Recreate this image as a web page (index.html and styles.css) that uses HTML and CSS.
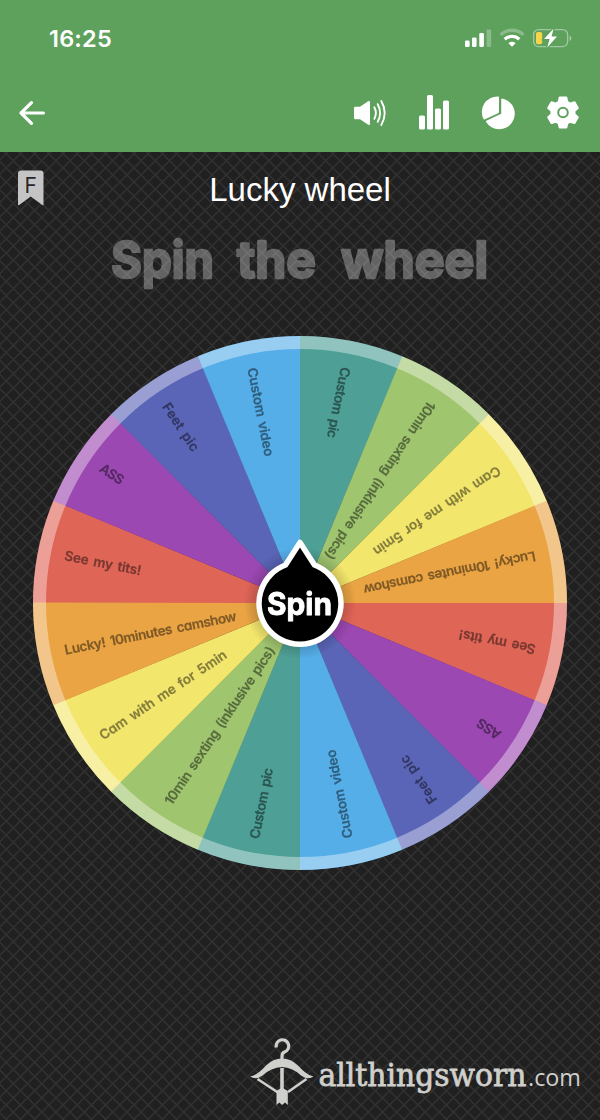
FILE: index.html
```html
<!DOCTYPE html>
<html lang="en">
<head>
  <meta charset="UTF-8">
  <title>Lucky wheel</title>
  <link rel="stylesheet" href="styles.css">
</head>
<body>
  <header class="header">
    <div class="status-bar">
      <span class="clock">16:25</span>
      <svg class="status-icons" width="110" height="24" viewBox="0 0 110 24">
        <g fill="#fff">
          <rect x="1" y="14.500" width="4.600" height="6.500" rx="1.300"/>
          <rect x="8" y="11.500" width="4.600" height="9.500" rx="1.300"/>
          <rect x="15.300" y="7" width="4.600" height="14" rx="1.300"/>
          <rect x="22.600" y="3.500" width="4.600" height="17.500" rx="1.300" opacity=".28"/>
          <path d="M48 20.800l-3.600-3.600a5.200 5.200 0 0 1 7.200 0z"/>
        </g>
        <g fill="none" stroke="#fff" stroke-width="3.300">
          <path d="M40.700 13.300a10.600 10.600 0 0 1 14.600 0"/>
          <path d="M36.600 8.700a16.800 16.800 0 0 1 22.800 0" opacity=".28"/>
        </g>
        <rect x="69.600" y="3.600" width="34" height="17" rx="5" fill="none" stroke="#fff" stroke-width="1.300" opacity=".42"/>
        <path d="M105.500 9.500v5.400a2.900 2.900 0 0 0 0-5.400z" fill="#fff" opacity=".45"/>
        <rect x="72" y="6" width="6.200" height="12.200" rx="2" fill="#f7d548"/>
        <path class="bolt" d="M89.500 2.800L80 13h5.600l-2.400 8.600L93 10.600h-5.400z"/>
      </svg>
    </div>
    <nav class="toolbar">
      <svg width="28" height="28" viewBox="0 0 28 28" fill="none" stroke="#fff" stroke-width="3.200" stroke-linecap="round" stroke-linejoin="round">
        <path d="M25.400 14H3M13.500 3.700L3 14l10.500 10.300"/>
      </svg>
      <div class="actions">
        <svg width="34" height="36" viewBox="0 0 34 36">
          <path d="M1 13q0-1.300 1.300-1.300H7L15.200 6.200Q17 5.300 17 7V29q0 1.700-1.800.8L7 24.300H2.300Q1 24.300 1 23z" fill="#fff"/>
          <g fill="none" stroke="#fff" stroke-width="1.900" stroke-linecap="round">
            <path d="M21.300 12.300q3.200 5.700 0 11.400"/>
            <path d="M24.700 9.200q4.900 8.800 0 17.600"/>
            <path d="M28.300 6q6.800 12 0 24"/>
          </g>
        </svg>
        <svg width="32" height="36" viewBox="0 0 32 36" fill="#fff">
          <rect x="1" y="20.500" width="6" height="14" rx="1.600"/>
          <rect x="9" y="0" width="6" height="34.500" rx="1.600"/>
          <rect x="17" y="13.500" width="6" height="21" rx="1.600"/>
          <rect x="25" y="5.500" width="6" height="29" rx="1.600"/>
        </svg>
        <svg width="34" height="36" viewBox="-1 .5 34 36" fill="#fff">
          <path d="M17 3Q17 2 16 2A15.500 15.500 0 0 0 1.500 24.500Q2 25.300 3 24.800L16.100 18.700Q17 18.200 17 17.200z"/>
          <path d="M19.200 4.400v14.800L4.300 26.300Q3.700 26.700 4.100 27.400A15.500 15.500 0 1 0 20.200 4z"/>
        </svg>
        <svg width="34" height="36" viewBox="0 .5 34 36">
          <path fill="#fff" stroke="#fff" stroke-width="2" stroke-linejoin="round" d="M13.700 3h6.600l1 4.400 2.900 1.700 4.300-1.400 3.300 5.800-3.300 3v3.300l3.300 3-3.300 5.800-4.300-1.400-2.900 1.700-1 4.100h-6.600l-1-4.100-2.900-1.700-4.300 1.400-3.300-5.800 3.300-3v-3.300l-3.300-3 3.300-5.800 4.300 1.400 2.900-1.700z"/>
          <circle cx="17" cy="18" r="4.800" fill="#fff" stroke="#5ea15d" stroke-width="2"/>
        </svg>
      </div>
    </nav>
  </header>

  <main class="board">
    <div class="title-row">
      <svg class="bookmark" width="26" height="36" viewBox="0 0 26 36">
        <path d="M0 3.500Q0 .5 3 .5H22.500Q25.500.5 25.500 3.500V34.500Q25.500 35.800 24.300 35L12.700 26.500 1.200 35Q0 35.800 0 34.500z" fill="#c4c4c4"/>
        <text class="badge" x="6.500" y="23">F</text>
      </svg>
      <h1>Lucky wheel</h1>
    </div>

    <svg class="headline" width="600" height="86" viewBox="0 -8 600 86">
      <text x="111" y="46" textLength="103" lengthAdjust="spacingAndGlyphs">Spin</text>
      <text x="237" y="46" textLength="79" lengthAdjust="spacingAndGlyphs">the</text>
      <text x="341" y="46" textLength="147" lengthAdjust="spacingAndGlyphs">wheel</text>
    </svg>

    <svg class="wheel" width="560" height="560" viewBox="-280 -280 560 560">
      <defs>
        <path id="slice" d="M0 0L-267 0A267 267 0 0 1 -246.500 -102.600Z"/>
        <radialGradient id="shade">
          <stop offset=".7" stop-color="#000" stop-opacity=".2"/>
          <stop offset="1" stop-color="#000" stop-opacity="0"/>
        </radialGradient>
      </defs>

      <use href="#slice" class="red"/>
      <use href="#slice" class="purple" transform="rotate(22.500)"/>
      <use href="#slice" class="indigo" transform="rotate(45)"/>
      <use href="#slice" class="blue" transform="rotate(67.500)"/>
      <use href="#slice" class="teal" transform="rotate(90)"/>
      <use href="#slice" class="green" transform="rotate(112.500)"/>
      <use href="#slice" class="yellow" transform="rotate(135)"/>
      <use href="#slice" class="orange" transform="rotate(157.500)"/>
      <use href="#slice" class="red" transform="rotate(180)"/>
      <use href="#slice" class="purple" transform="rotate(202.500)"/>
      <use href="#slice" class="indigo" transform="rotate(225)"/>
      <use href="#slice" class="blue" transform="rotate(247.500)"/>
      <use href="#slice" class="teal" transform="rotate(270)"/>
      <use href="#slice" class="green" transform="rotate(292.500)"/>
      <use href="#slice" class="yellow" transform="rotate(315)"/>
      <use href="#slice" class="orange" transform="rotate(337.500)"/>
      <circle class="rim" r="260.500"/>

      <g class="labels">
        <text x="-240" y="4" textLength="78" transform="rotate(11.250)">See my tits!</text>
        <text x="-241" y="2" textLength="26" transform="rotate(33.750)">ASS</text>
        <text x="-240" y="6" textLength="55" transform="rotate(56.250)">Feet pic</text>
        <text x="-240" y="6" textLength="90" transform="rotate(78.750)">Custom video</text>
        <text x="-240" y="6" textLength="72" transform="rotate(101.250)">Custom pic</text>
        <text x="-240" y="6" textLength="187" transform="rotate(123.750)">10min sexting (inklusive pics)</text>
        <text x="-240" y="5" textLength="150" transform="rotate(146.250)">Cam with me for 5min</text>
        <text x="-240" y="5" textLength="175" transform="rotate(168.750)">Lucky! 10minutes camshow</text>
        <text x="-240" y="5" textLength="78" transform="rotate(191.250)">See my tits!</text>
        <text x="-240" y="5" textLength="26" transform="rotate(213.750)">ASS</text>
        <text x="-240" y="5" textLength="55" transform="rotate(236.250)">Feet pic</text>
        <text x="-240" y="6" textLength="90" transform="rotate(258.750)">Custom video</text>
        <text x="-240" y="6" textLength="72" transform="rotate(281.250)">Custom pic</text>
        <text x="-240" y="6" textLength="187" transform="rotate(303.750)">10min sexting (inklusive pics)</text>
        <text x="-240" y="5" textLength="150" transform="rotate(326.250)">Cam with me for 5min</text>
        <text x="-240" y="5" textLength="175" transform="rotate(348.750)">Lucky! 10minutes camshow</text>
      </g>

      <circle r="56" fill="url(#shade)"/>
      <path class="pointer" d="M0 -60.500L14.500 -38A41 41 0 1 1 -14.500 -38Z"/>
      <text class="spin" x="-33" y="12" textLength="65" lengthAdjust="spacingAndGlyphs">Spin</text>
    </svg>

    <footer class="brand">
      <svg width="332" height="68" viewBox="0 0 332 68">
        <g fill="none" stroke="#cfcfcb" stroke-width="3">
          <path d="M26.300 9.500A6.300 6.300 0 1 1 34.500 14Q32 15 32 18v6" stroke-width="3.200"/>
          <path d="M32 30v28" stroke-width="3.600"/>
          <path d="M7.500 41L28 54.500M56.500 41L38 54" stroke-width="2.600"/>
        </g>
        <path d="M0 38.500Q7 37.500 16 27.500 23 20.500 32 20.500T48 27.500Q57 37.500 63.500 38.500 58 42.500 51 37.500 43 29.500 32 29 21 29.500 12.500 37.500 6 42.500 0 38.500z" fill="#cfcfcb"/>
        <path d="M26.500 53l5.500-3.500 5.800 3.500v14l-2.800-2.500-2.900 2.500-2.800-2.500-2.800 2.500z" fill="#cfcfcb"/>
        <text class="brand-name" x="68.500" y="48" textLength="208" lengthAdjust="spacingAndGlyphs">allthingsworn</text>
        <text class="brand-tld" x="278" y="48" textLength="53" lengthAdjust="spacingAndGlyphs">.com</text>
      </svg>
    </footer>
  </main>
</body>
</html>
```
FILE: styles.css
```css
* {
  box-sizing: border-box;
}

body {
  margin: 0;
  width: 600px;
  height: 1120px;
  display: flex;
  flex-direction: column;
  overflow: hidden;
  font-family: Inter, "Liberation Sans", sans-serif;
  background-color: #202020;
  color: #fff;
}

svg {
  display: block;
}

.header {
  height: 152px;
  flex-shrink: 0;
  background-color: #5ea15d;
}

.status-bar {
  display: flex;
  justify-content: space-between;
  align-items: center;
  height: 76px;
  padding: 0 26px 0 49px;
}

.clock {
  font-size: 23.5px;
  font-weight: 600;
  letter-spacing: 0.2px;
}

.status-icons {
  margin-top: -1px;
}

.bolt {
  fill: #fff;
  stroke: #5ea15d;
  stroke-width: 2.500;
  paint-order: stroke;
}

.toolbar {
  display: flex;
  justify-content: space-between;
  align-items: center;
  height: 73px;
  padding: 0 20px 0 18px;
}

.actions {
  display: flex;
  align-items: center;
  gap: 31px;
}

/* crosshatch */
.board {
  flex: 1;
  display: flex;
  flex-direction: column;
  background-color: #202020;
  background-image:
    repeating-linear-gradient(45deg, transparent 0, transparent 3.8px, #303030 4.6px, #303030 5.4px, transparent 6.2px, transparent 10.04px),
    repeating-linear-gradient(-45deg, transparent 0, transparent 7.6px, #303030 8.4px, #303030 9.2px, transparent 10px, transparent 10.04px);
}

.title-row {
  display: grid;
  grid-template-columns: 60px 1fr 60px;
  align-items: center;
  height: 72px;
}

.bookmark {
  margin-left: 18px;
}

.badge {
  font-size: 21px;
  fill: #262626;
}

h1 {
  margin: 4px 0 0;
  text-align: center;
  font-family: "Liberation Sans", Arial, sans-serif;
  font-size: 33px;
  font-weight: 400;
}

.headline {
  font-size: 51px;
  font-weight: 700;
  fill: #fff;
  stroke: #fff;
  stroke-width: 2.4;
  stroke-linejoin: round;
  opacity: 0.3;
}

.wheel {
  margin: 13px auto 0;
}

.red { fill: #df6557; }
.purple { fill: #9b48b2; }
.indigo { fill: #5b65b7; }
.blue { fill: #56aee9; }
.teal { fill: #4e9f96; }
.green { fill: #a0c56f; }
.yellow { fill: #f3e66d; }
.orange { fill: #eaa444; }

.rim {
  fill: none;
  stroke: #fff;
  stroke-width: 13;
  opacity: 0.38;
}

.labels {
  font-size: 13.5px;
  font-weight: 600;
  font-feature-settings: "cv11";
  word-spacing: 2px;
  fill: #000;
  stroke: #000;
  stroke-width: 0.25;
  stroke-linejoin: round;
  opacity: 0.47;
}

.pointer {
  fill: #000;
  stroke: #fff;
  stroke-width: 5.500;
  stroke-linejoin: round;
}

.spin {
  font-size: 31px;
  font-weight: 700;
  fill: #fff;
  stroke: #fff;
  stroke-width: 0.9;
  stroke-linejoin: round;
}

.brand {
  display: flex;
  justify-content: flex-end;
  margin: auto 18px 14px 0;
}

.brand-name {
  font-family: "DejaVu Serif", serif;
  font-size: 31px;
  fill: #cfcfcb;
  stroke: #cfcfcb;
  stroke-width: 0.8;
}

.brand-tld {
  font-family: "Open Sans", sans-serif;
  font-size: 24px;
  fill: #cfcfcb;
}
```
